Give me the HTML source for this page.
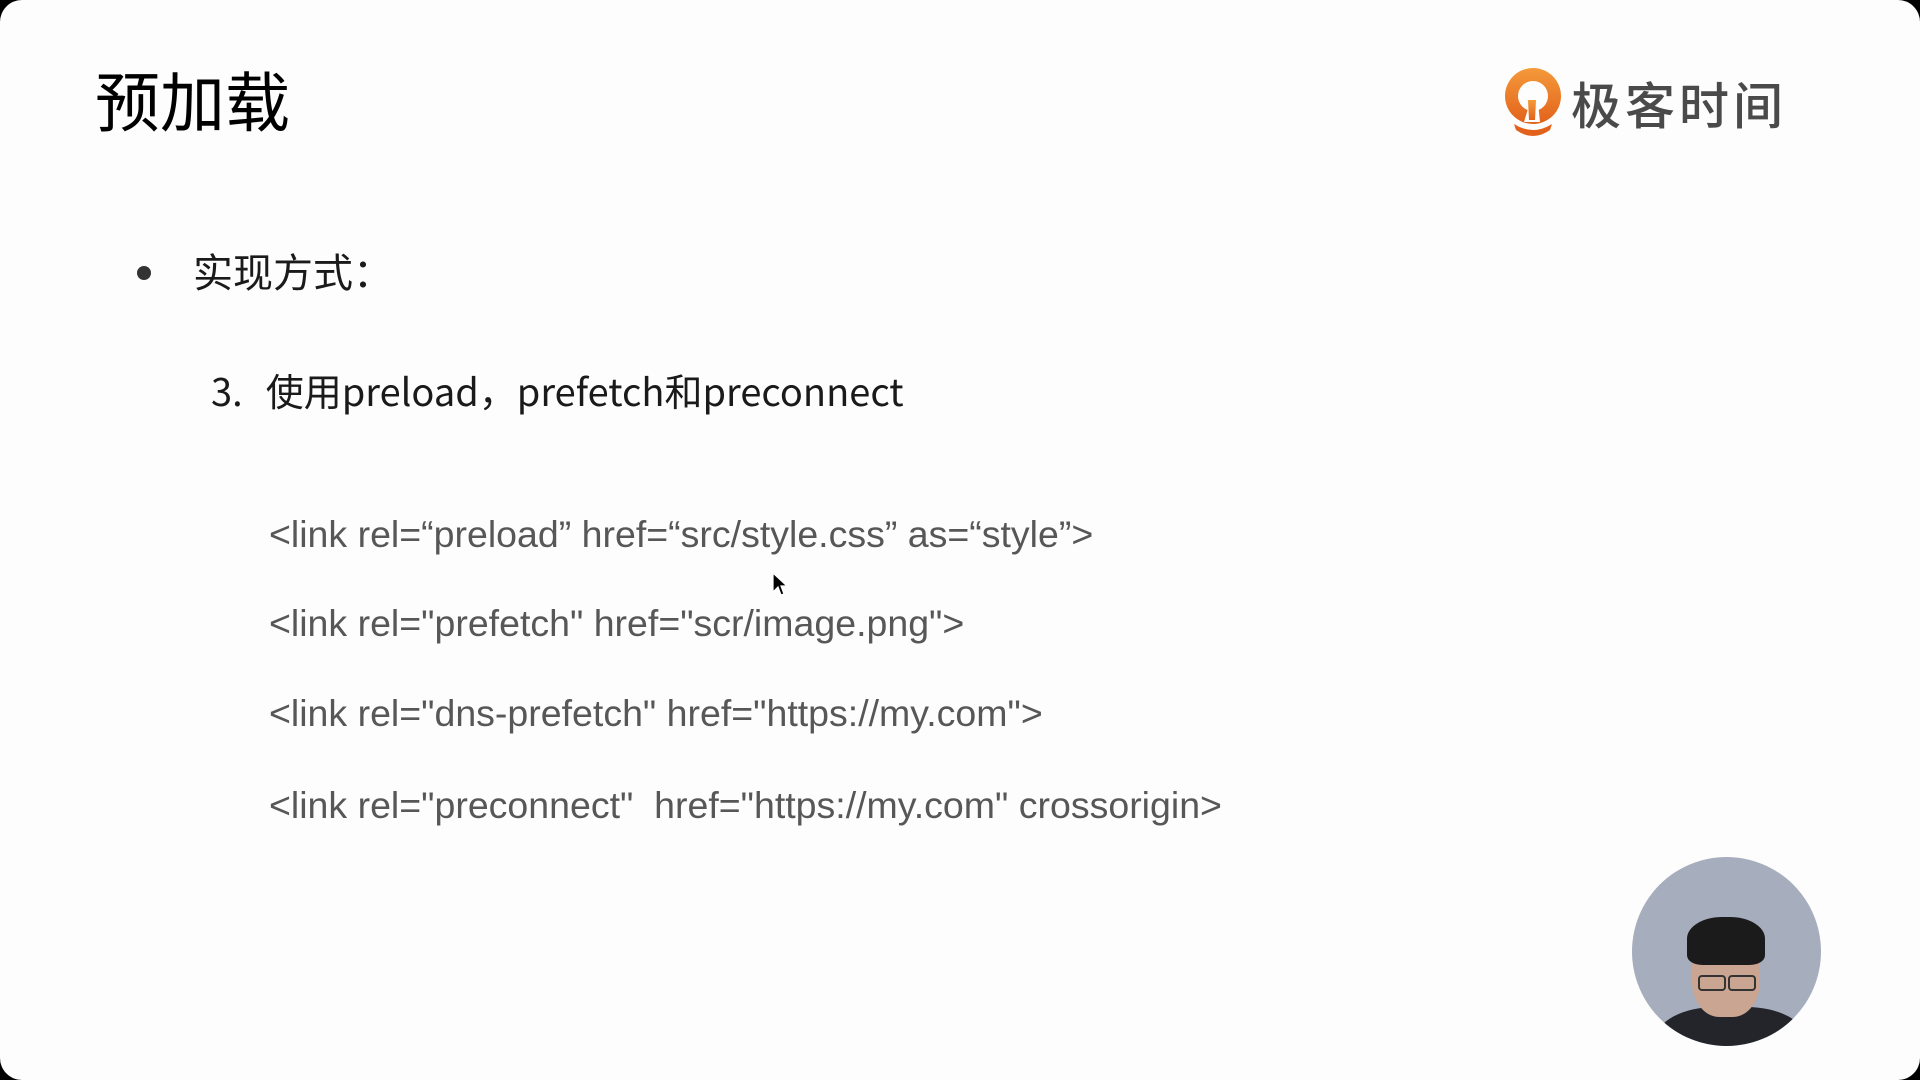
<!DOCTYPE html>
<html><head><meta charset="utf-8"><style>
html,body{margin:0;padding:0;background:#000;}
.slide{position:absolute;left:0;top:0;width:1920px;height:1080px;background:#fdfdfd;border-radius:22px;overflow:hidden;}
.a{position:absolute;white-space:nowrap;line-height:1;}
.cjk{font-family:"Noto Sans CJK SC","Liberation Sans",sans-serif;color:#111;}
.code{font-family:"Liberation Sans",Arial,sans-serif;font-size:37.5px;color:#575757;}
</style></head><body>
<div class="slide">
<div class="a cjk" style="left:95px;top:66px;font-size:65px;color:#000;">预加载</div>
<div class="a" style="left:137px;top:266px;width:14px;height:14px;border-radius:50%;background:#333;"></div>
<div class="a cjk" style="left:193px;top:250px;font-size:40px;color:#1a1a1a;">实现方式：</div>
<div class="a cjk" style="left:211px;top:371px;font-size:38px;color:#1a1a1a;">3.&nbsp;&nbsp;<span style="margin-left:6px">使用preload，prefetch和preconnect</span></div>
<div class="a code" style="left:269px;top:516px;">&lt;link rel=“preload” href=“src/style.css” as=“style”&gt;</div>
<div class="a code" style="left:269px;top:605px;">&lt;link rel="prefetch" href="scr/image.png"&gt;</div>
<div class="a code" style="left:269px;top:695px;">&lt;link rel="dns-prefetch" href="https://my.com"&gt;</div>
<div class="a code" style="left:269px;top:787px;">&lt;link rel="preconnect"&nbsp; href="https://my.com" crossorigin&gt;</div>
<svg class="a" style="left:772px;top:572px" width="16" height="26" viewBox="0 0 16 26"><path d="M1 1 L1 20 L6 15 L9 23 L12 22 L9 14 L15 14 Z" fill="#000" stroke="#fff" stroke-width="1.2"/></svg>
<svg class="a" style="left:1502px;top:66px" width="62" height="72" viewBox="0 0 62 72">
<defs><linearGradient id="g" x1="0" y1="0" x2="0" y2="1"><stop offset="0" stop-color="#f49a3a"/><stop offset="1" stop-color="#e2621b"/></linearGradient></defs>
<circle cx="31" cy="30" r="28" fill="url(#g)"/>
<circle cx="31" cy="30" r="15" fill="#fdfdfd"/>
<path d="M22 56 L28 36 L36 36 L38 56 Z" fill="#fdfdfd"/>
<path d="M26 34 L34 34 L33 54 L27 54 Z" fill="url(#g)"/>
<path d="M12 58 Q31 70 50 58 L48 64 Q31 76 14 64 Z" fill="#e2621b"/>
</svg>
<div class="a" style="left:1571px;top:78px;font-size:50px;font-family:'Noto Sans CJK SC',sans-serif;font-weight:500;color:#4a4a4a;letter-spacing:4px;">极客时间</div>
<div class="a" style="left:1632px;top:857px;width:189px;height:189px;border-radius:50%;overflow:hidden;background:#a6adbd;">
<div class="a" style="left:24px;top:150px;width:150px;height:80px;border-radius:40% 40% 0 0;background:#23252a;"></div>
<div class="a" style="left:60px;top:70px;width:68px;height:90px;border-radius:40%;background:#c9a592;"></div>
<div class="a" style="left:55px;top:60px;width:78px;height:48px;border-radius:45% 45% 20% 20%;background:#1c1b1c;"></div>
<div class="a" style="left:66px;top:118px;width:24px;height:12px;border:2px solid #333;border-radius:4px;"></div>
<div class="a" style="left:96px;top:118px;width:24px;height:12px;border:2px solid #333;border-radius:4px;"></div>
</div>
</div>
</body></html>
